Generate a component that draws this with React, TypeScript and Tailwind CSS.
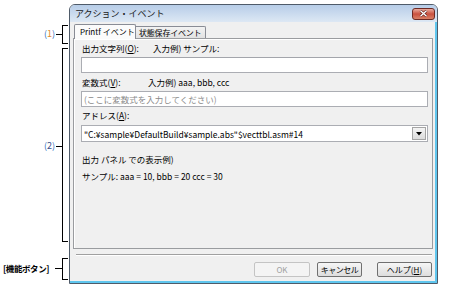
export default function App() {
  return (
    <div className="relative w-[475px] h-[287px] bg-white overflow-hidden font-['Noto_Sans_CJK_JP','Liberation_Sans',sans-serif] text-[8.5px] leading-[12px] text-black whitespace-nowrap">
      {/* annotation (1) */}
      <div className="absolute left-[44px] top-[28px] text-[9px] leading-[12px]">
        <span className="text-[#2f6fc0]">(</span>
        <span className="text-[#e08a2c]">1</span>
        <span className="text-[#2f6fc0]">)</span>
      </div>
      <div className="absolute left-[56px] top-[34px] w-[7px] h-px bg-black" />
      <div className="absolute left-[62px] top-[25px] w-[6px] h-[19px] border-l border-t border-b border-black" />
      {/* annotation (2) */}
      <div className="absolute left-[44px] top-[140px] text-[9px] leading-[12px]">
        <span className="text-[#2f6fc0]">(</span>
        <span className="text-[#3a4f8a]">2</span>
        <span className="text-[#2f6fc0]">)</span>
      </div>
      <div className="absolute left-[56px] top-[146px] w-[7px] h-px bg-black" />
      <div className="absolute left-[62px] top-[48px] w-[6px] h-[194px] border-l border-t border-b border-black" />
      {/* annotation buttons */}
      <div className="absolute left-[3px] top-[262px] text-[8.5px] leading-[12px] font-bold tracking-[-0.4px]">[機能ボタン]</div>
      <div className="absolute left-[55px] top-[268px] w-[8px] h-px bg-black" />
      <div className="absolute left-[62px] top-[258px] w-[6px] h-[22px] border-l border-t border-b border-black" />

      <div className="pt-[4px] pl-[69px]">
        <div className="w-[369px] h-[280px] flex flex-col border border-[#4f5b69] rounded-t-[6px] overflow-hidden">
          {/* title bar */}
          <div className="h-[17px] shrink-0 flex items-center justify-between bg-gradient-to-b from-[#b7cde8] to-[#dde8f4] pl-[5px] pr-[2px]">
            <span className="text-[9px] leading-[12px] text-[#1a1a1a]">アクション・イベント</span>
            <div className="w-[23px] h-[12px] rounded-[3px] border border-[#6d2a24] bg-gradient-to-b from-[#e9ab9e] via-[#c9503f] to-[#d98066] flex items-center justify-center">
              <svg width="9" height="7" viewBox="0 0 9 7">
                <path d="M1.5 0.8 L7.5 6.2 M7.5 0.8 L1.5 6.2" stroke="#5a1a14" strokeWidth="2.6" />
                <path d="M1.5 0.8 L7.5 6.2 M7.5 0.8 L1.5 6.2" stroke="#ffffff" strokeWidth="1.4" />
              </svg>
            </div>
          </div>
          {/* client */}
          <div className="flex-1 bg-[#f0f0f0] border-r-2 border-b-2 border-[#5fc6ee] flex flex-col">
            {/* tabs */}
            <div className="mt-[2px] ml-[4px] h-[14px] flex items-end">
              <div className="relative z-10 -mb-px h-[15px] w-[62px] bg-[#fbfbfb] border-l border-t border-r border-[#898c95] rounded-t-[2px] pl-[5px] leading-[13px] text-[8px]">
                Printf イベント
              </div>
              <div className="h-[12px] w-[70px] bg-gradient-to-b from-[#f3f3f3] to-[#e2e2e2] border-t border-r border-[#898c95] rounded-tr-[2px] pl-[3px] leading-[11px] text-[8px] tracking-[-0.2px]">
                状態保存イベント
              </div>
            </div>
            {/* panel */}
            <div className="ml-[3px] w-[360px] h-[211px] border border-[#9a9c9f] shadow-[inset_1px_1px_0_#ffffff] bg-[#f0f0f0] pl-[7px] pt-[3px]">
              <div className="flex pl-[1px]">
                <span className="w-[71px]">
                  出力文字列(<span className="underline">O</span>):
                </span>
                <span>入力例) サンプル:</span>
              </div>
              <div className="mt-[3px] w-[347px] h-[16px] bg-white border border-[#abadb3] border-t-[#a3a5ab]" />
              <div className="mt-[3px] flex pl-[1px]">
                <span className="w-[66px]">
                  変数式(<span className="underline">V</span>):
                </span>
                <span>入力例) aaa, bbb, ccc</span>
              </div>
              <div className="mt-[3px] w-[347px] h-[16px] bg-white border border-[#abadb3] pl-[2px] leading-[14px] text-[#8a8a8a]">
                (ここに変数式を入力してください)
              </div>
              <div className="mt-[2px] pl-[1px]">
                アドレス(<span className="underline">A</span>):
              </div>
              <div className="mt-[4px] w-[347px] h-[17px] bg-white border border-[#abadb3] flex items-center justify-between pl-[2px] pr-px">
                <span className="leading-[14px]">"C:¥sample¥DefaultBuild¥sample.abs"$vecttbl.asm#14</span>
                <div className="w-[14px] h-[13px] bg-gradient-to-b from-[#f4f4f4] to-[#dcdcdc] border border-[#a5a5a5] flex items-center justify-center">
                  <svg width="6" height="4" viewBox="0 0 6 4">
                    <path d="M0 0 H6 L3 3.5 Z" fill="#000" />
                  </svg>
                </div>
              </div>
              <div className="mt-[11px] pl-[1px]">出力 パネル での表示例)</div>
              <div className="mt-[5px] pl-[1px]">サンプル: aaa = 10, bbb = 20 ccc = 30</div>
            </div>
            {/* separator */}
            <div className="mt-[5px] ml-[6px] w-[356px] h-[2px] border-t border-[#a0a0a0] border-b border-b-white" />
            {/* buttons */}
            <div className="mt-[6px] ml-[184px] flex text-[8px]">
              <div className="w-[56px] h-[15px] border border-[#c4c4c4] rounded-[2px] bg-[#f4f4f4] flex items-center justify-center text-[#a0a0a0] leading-[12px]">
                OK
              </div>
              <div className="ml-[7px] w-[45px] h-[15px] border border-[#707070] rounded-[2px] bg-gradient-to-b from-[#f6f6f6] to-[#dddddd] flex items-center justify-center leading-[12px] tracking-[-0.5px]">
                キャンセル
              </div>
              <div className="ml-[15px] w-[55px] h-[15px] border border-[#707070] rounded-[2px] bg-gradient-to-b from-[#f6f6f6] to-[#dddddd] flex items-center justify-center leading-[12px]">
                ヘルプ(<span className="underline">H</span>)
              </div>
            </div>
          </div>
        </div>
      </div>
    </div>
  );
}
